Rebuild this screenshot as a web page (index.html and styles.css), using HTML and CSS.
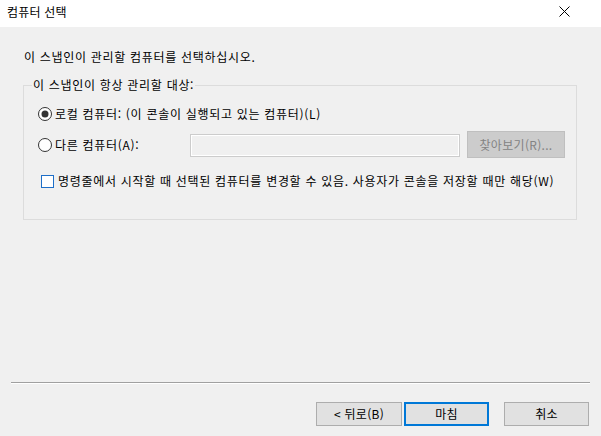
FILE: index.html
```html
<!DOCTYPE html>
<html lang="ko">
<head>
<meta charset="utf-8">
<title>컴퓨터 선택</title>
<link rel="stylesheet" href="styles.css">
</head>
<body>
<div class="window">
  <div class="titlebar">
    <span class="title">컴퓨터 선택</span>
    <svg class="close" width="11" height="11" viewBox="0 0 11 11"><path d="M0.5 0.5 L10.5 10.5 M10.5 0.5 L0.5 10.5" stroke="#000" stroke-width="1" fill="none"/></svg>
  </div>
  <div class="content">
    <p class="intro">이 스냅인이 관리할 컴퓨터를 선택하십시오.</p>
    <fieldset class="group">
      <legend class="legend">이 스냅인이 항상 관리할 대상:</legend>
      <div class="row row-local">
        <svg class="radio" width="14" height="14" viewBox="0 0 14 14"><circle cx="7" cy="7" r="6.5" fill="#fff" stroke="#333" stroke-width="1"/><circle cx="7" cy="7" r="3.5" fill="#333"/></svg>
        <span class="label">로컬 컴퓨터: (이 콘솔이 실행되고 있는 컴퓨터)(L)</span>
      </div>
      <div class="row row-other">
        <div class="other-label">
          <svg class="radio" width="14" height="14" viewBox="0 0 14 14"><circle cx="7" cy="7" r="6.5" fill="#fff" stroke="#333" stroke-width="1"/></svg>
          <span class="label">다른 컴퓨터(A):</span>
        </div>
        <div class="edit"></div>
        <div class="browse">찾아보기(R)...</div>
      </div>
      <div class="row row-check">
        <span class="checkbox"></span>
        <span class="label">명령줄에서 시작할 때 선택된 컴퓨터를 변경할 수 있음. 사용자가 콘솔을 저장할 때만 해당(W)</span>
      </div>
    </fieldset>
  </div>
  <div class="separator"></div>
  <div class="buttons">
    <div class="btn btn-back">&lt; 뒤로(B)</div>
    <div class="btn btn-finish">마침</div>
    <div class="btn btn-cancel">취소</div>
  </div>
</div>
</body>
</html>
```

FILE: styles.css
```css
html, body {
  margin: 0;
  padding: 0;
}
body {
  background: #f0f0f0;
  font-family: "Noto Sans CJK KR", "Noto Sans", sans-serif;
  font-size: 12px;
  letter-spacing: 0.7px;
  color: #000;
  width: 601px;
  height: 436px;
  overflow: hidden;
}
.window {
  width: 601px;
  height: 436px;
  display: flex;
  flex-direction: column;
}
.titlebar {
  height: 27px;
  background: #fff;
  display: flex;
  align-items: center;
  justify-content: space-between;
  padding: 0 31px 0 7px;
  box-sizing: border-box;
  flex: none;
}
.title {
  line-height: 16px;
  margin-top: -4px;
  letter-spacing: 0.2px;
}
.close {
  display: block;
  margin-top: -4px;
}
.content {
  padding: 0 23px;
}
.intro {
  margin: 22px 0 0 1px;
  line-height: 16px;
}
.group {
  margin: 12px 0 0 0;
  width: 554px;
  height: 143px;
  box-sizing: border-box;
  border: 1px solid #dcdcdc;
  padding: 0 0 0 8px;
  min-width: 0;
}
.legend {
  padding: 0 1px;
  line-height: 16px;
}
.row {
  display: flex;
  align-items: center;
}
.label {
  line-height: 16px;
  white-space: nowrap;
}
.radio {
  display: block;
  flex: none;
  margin-right: 3px;
}
.row-local {
  height: 20px;
  margin-top: 11px;
  padding-left: 6px;
}
.row-other {
  height: 27px;
  margin-top: 7px;
}
.other-label {
  display: flex;
  align-items: center;
  width: 158px;
  box-sizing: border-box;
  padding-left: 6px;
  flex: none;
}
.edit {
  width: 270px;
  height: 23px;
  box-sizing: border-box;
  border: 1px solid #cccccc;
  box-shadow: inset 0 0 0 1px #ffffff;
  background: #f0f0f0;
  margin-top: 1px;
}
.browse {
  margin-left: 7px;
  width: 98px;
  height: 27px;
  box-sizing: border-box;
  background: #cccccc;
  border: 1px solid #bfbfbf;
  color: #838383;
  display: flex;
  align-items: center;
  justify-content: center;
  line-height: 16px;
  letter-spacing: 0.3px;
}
.row-check {
  height: 20px;
  margin-top: 13px;
  padding-left: 9px;
}
.checkbox {
  display: block;
  flex: none;
  width: 13px;
  height: 13px;
  box-sizing: border-box;
  border: 1px solid #1e6fc8;
  background: #fff;
  margin-right: 4px;
}
.separator {
  margin: 162px 11px 0 11px;
  height: 1px;
  background: #a0a0a0;
  border-bottom: 1px solid #ffffff;
}
.buttons {
  display: flex;
  justify-content: flex-end;
  padding-right: 12px;
  margin-top: 18px;
}
.btn {
  height: 24px;
  box-sizing: border-box;
  background: #e1e1e1;
  border: 1px solid #adadad;
  display: flex;
  align-items: center;
  justify-content: center;
  line-height: 16px;
  letter-spacing: 0.3px;
}
.btn-back {
  width: 86px;
}
.btn-finish {
  width: 85px;
  margin-left: 2px;
  border: 2px solid #0078d7;
}
.btn-cancel {
  width: 85px;
  margin-left: 15px;
}
```
